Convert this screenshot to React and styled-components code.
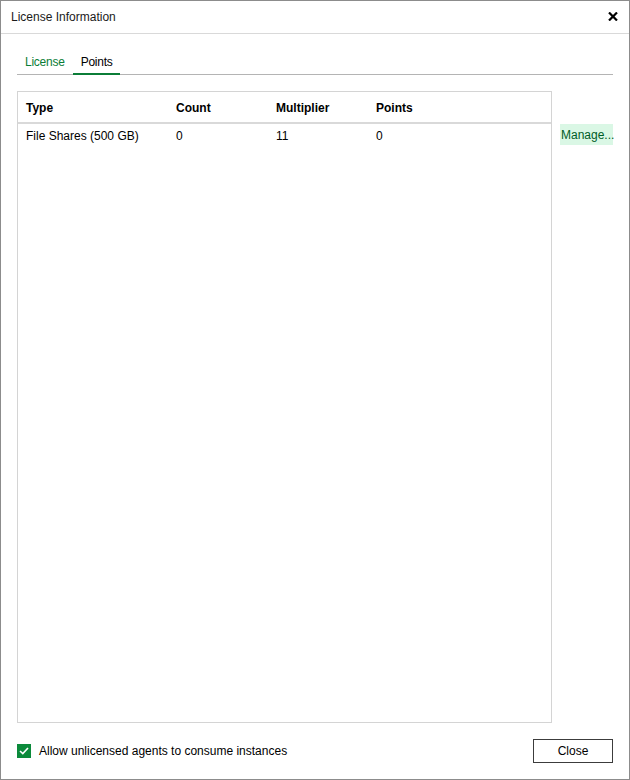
import React, { useState } from 'react';
import styled, { createGlobalStyle } from 'styled-components';

const GlobalStyle = createGlobalStyle`
  html, body {
    margin: 0;
    padding: 0;
    background: #ffffff;
  }
  * {
    box-sizing: border-box;
  }
`;

const Window = styled.div`
  width: 630px;
  height: 780px;
  border: 1px solid #8c8c8c;
  background: #ffffff;
  display: flex;
  flex-direction: column;
  font-family: "Segoe UI", "Liberation Sans", Arial, sans-serif;
  font-size: 12px;
  color: #000;
`;

const TitleBar = styled.div`
  height: 33px;
  flex: none;
  display: flex;
  align-items: center;
  justify-content: space-between;
  padding: 0 10px 1px 10px;
  border-bottom: 1px solid #d9d9d9;
`;

const Title = styled.span`
  color: #1a1a1a;
`;

const CloseIcon = styled.button`
  border: none;
  background: none;
  padding: 0;
  width: 12px;
  height: 12px;
  display: flex;
  align-items: center;
  justify-content: center;
  cursor: pointer;
`;

const Body = styled.div`
  flex: 1;
  display: flex;
  flex-direction: column;
  padding: 0 16px 16px 16px;
  min-height: 0;
`;

const TabStrip = styled.div`
  margin-top: 17px;
  display: flex;
  border-bottom: 1px solid #b4b4b4;
`;

const Tab = styled.button`
  border: none;
  background: none;
  font: inherit;
  letter-spacing: -0.25px;
  padding: 1px 8px 0 8px;
  line-height: 21px;
  margin-bottom: -1px;
  border-bottom: 2px solid ${p => (p.$active ? '#0b7d37' : 'transparent')};
  color: ${p => (p.$active ? '#000' : '#0b7d37')};
  cursor: pointer;
`;

const Content = styled.div`
  flex: 1;
  margin-top: 16px;
  display: flex;
  gap: 8px;
  min-height: 0;
`;

const Grid = styled.div`
  width: 536px;
  border: 1px solid #d4d4d4;
  display: flex;
  flex-direction: column;
`;

const HeaderRow = styled.div`
  display: grid;
  grid-template-columns: 150px 100px 100px 1fr;
  height: 32px;
  padding: 1px 0 0 8px;
  align-items: center;
  border-bottom: 2px solid #d9d9d9;
  font-weight: bold;
`;

const Row = styled.div`
  display: grid;
  grid-template-columns: 150px 100px 100px 1fr;
  height: 22px;
  padding: 1px 0 0 8px;
  align-items: center;
`;

const Side = styled.div`
  padding-top: 33px;
`;

const ManageButton = styled.button`
  border: none;
  font: inherit;
  background: #daf7e5;
  color: #005c27;
  height: 21px;
  width: 53px;
  padding: 0 0 0 1px;
  text-align: left;
  cursor: pointer;
`;

const Footer = styled.div`
  margin-top: 16px;
  height: 24px;
  display: flex;
  align-items: center;
  justify-content: space-between;
`;

const CheckLabel = styled.label`
  display: flex;
  align-items: center;
  gap: 8px;
  cursor: pointer;
`;

const Box = styled.span`
  width: 14px;
  height: 14px;
  background: ${p => (p.$checked ? '#0b8a3b' : '#fff')};
  border: ${p => (p.$checked ? 'none' : '1px solid #333')};
  display: flex;
  align-items: center;
  justify-content: center;
`;

const CloseButton = styled.button`
  width: 80px;
  height: 24px;
  border: 1px solid #3c3c3c;
  background: #fff;
  font: inherit;
  color: #000;
  cursor: pointer;
`;

const rows = [{ type: 'File Shares (500 GB)', count: 0, multiplier: 11, points: 0 }];

export default function App() {
  const [tab, setTab] = useState('points');
  const [allow, setAllow] = useState(true);

  return (
    <>
      <GlobalStyle />
      <Window>
        <TitleBar>
          <Title>License Information</Title>
          <CloseIcon aria-label="Close">
            <svg width="10" height="9" viewBox="0 0 10 9">
              <path d="M1 0.5 L9 8.5 M9 0.5 L1 8.5" stroke="#000" strokeWidth="2.2" />
            </svg>
          </CloseIcon>
        </TitleBar>
        <Body>
          <TabStrip>
            <Tab $active={tab === 'license'} onClick={() => setTab('license')}>License</Tab>
            <Tab $active={tab === 'points'} onClick={() => setTab('points')}>Points</Tab>
          </TabStrip>
          <Content>
            <Grid>
              <HeaderRow>
                <span>Type</span>
                <span>Count</span>
                <span>Multiplier</span>
                <span>Points</span>
              </HeaderRow>
              {rows.map(r => (
                <Row key={r.type}>
                  <span>{r.type}</span>
                  <span>{r.count}</span>
                  <span>{r.multiplier}</span>
                  <span>{r.points}</span>
                </Row>
              ))}
            </Grid>
            <Side>
              <ManageButton>Manage...</ManageButton>
            </Side>
          </Content>
          <Footer>
            <CheckLabel onClick={() => setAllow(!allow)}>
              <Box $checked={allow}>
                {allow && (
                  <svg width="10" height="8" viewBox="0 0 10 8">
                    <path d="M1 4 L3.8 6.6 L9 1" stroke="#fff" strokeWidth="1.6" fill="none" />
                  </svg>
                )}
              </Box>
              <span>Allow unlicensed agents to consume instances</span>
            </CheckLabel>
            <CloseButton>Close</CloseButton>
          </Footer>
        </Body>
      </Window>
    </>
  );
}
